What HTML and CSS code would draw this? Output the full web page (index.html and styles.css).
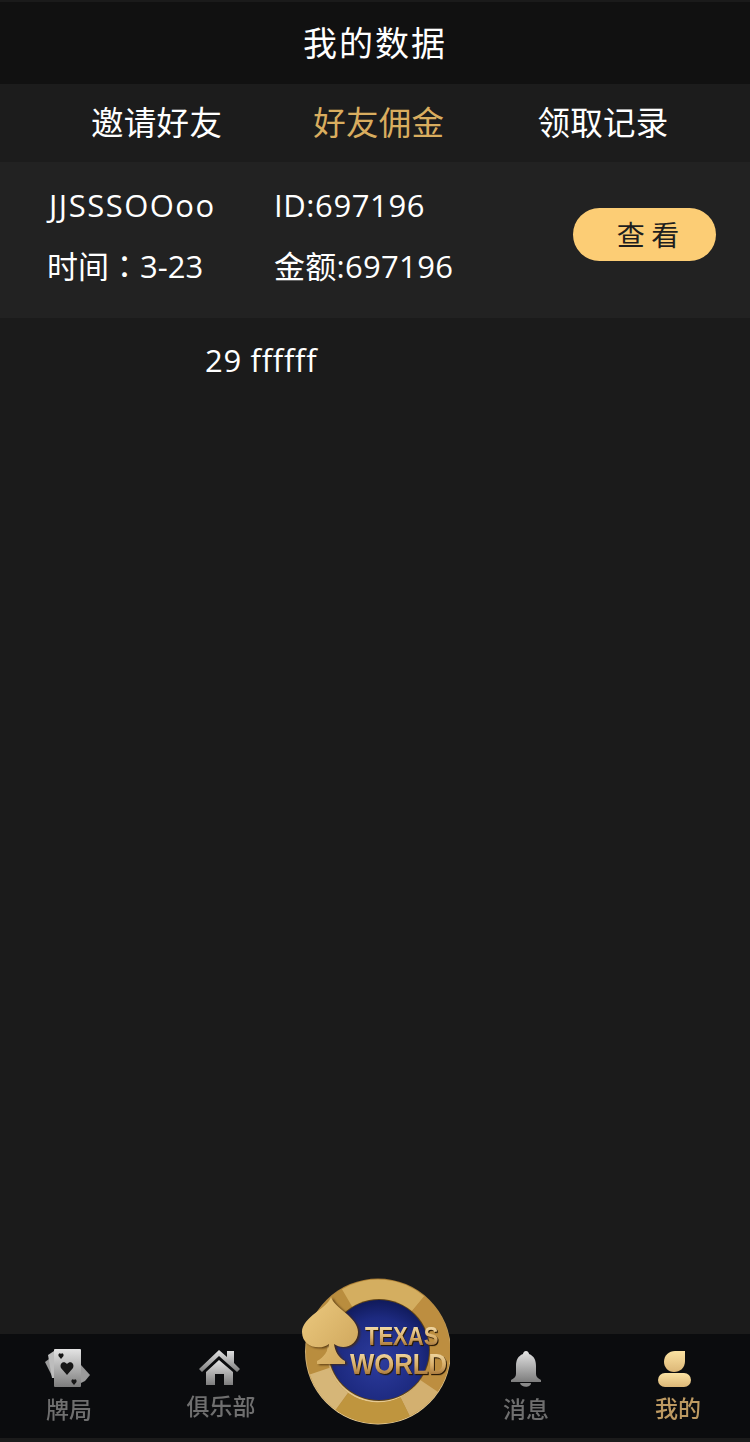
FILE: index.html
```html
<!DOCTYPE html>
<html lang="zh">
<head>
<meta charset="utf-8">
<title>我的数据</title>
<link rel="stylesheet" href="styles.css">
</head>
<body>
<div class="app">
  <header class="title">我的数据</header>
  <nav class="tabs">
    <span class="tab tab-a">邀请好友</span>
    <span class="tab tab-b active">好友佣金</span>
    <span class="tab tab-c">领取记录</span>
  </nav>
  <section class="row">
    <div class="col col-name">
      <div class="name">JJSSSOOoo</div>
      <div class="time" lang="zh-TW">时间：3-23</div>
    </div>
    <div class="col col-id">
      <div class="uid">ID:697196</div>
      <div>金额:697196</div>
    </div>
    <button class="view">查 看</button>
  </section>
  <p class="stray">29 ffffff</p>
  <div class="spacer"></div>
  <footer class="bar">
    <div class="item item-cards">
      <svg class="ico" width="48" height="40" viewBox="0 0 48 40">
        <defs>
          <linearGradient id="g" x1="0" y1="0" x2="0" y2="1"><stop offset="0" stop-color="#e4e4e4"/><stop offset="1" stop-color="#7d7d7d"/></linearGradient>
          <linearGradient id="gold" x1="0" y1="0" x2="0" y2="1"><stop offset="0" stop-color="#fbe2a2"/><stop offset="1" stop-color="#dcb777"/></linearGradient>
        </defs>
        <path d="M1 14 L9 8 L9 30 Z" fill="#9c9c9c"/>
        <path d="M4 7 L10 3 L10 30 L8 30 Z" fill="#bdbdbd"/>
        <path d="M37 17 L46 27 L41 33 L37 35 Z" fill="#9a9a9a"/>
        <rect x="10" y="1" width="27" height="38" rx="1" fill="url(#g)"/>
        <path d="M23 27 L17 20 C15 15 20 12 23 16 C26 12 31 15 29 20 Z" fill="#161616"/>
        <path d="M17 11 L14.500 8 C14 5.500 16 4.500 17 6 C18 4.500 20 5.500 19.500 8 Z" fill="#161616"/>
        <path d="M30 37 L27.500 34 C27 31.500 29 30.500 30 32 C31 30.500 33 31.500 32.500 34 Z" fill="#161616"/>
      </svg>
      <span>牌局</span>
    </div>
    <div class="item item-club">
      <svg class="ico" width="42" height="38" viewBox="0 0 42 38">
        <path d="M0 20 L20 1 L28 8 L28 2 L35 2 L35 14 L41 20 L38 23 L20 7 L3 23 Z" fill="url(#g)"/>
        <path d="M7 23 L20 11 L34 23 L34 36 L25 36 L25 25 L16 25 L16 36 L7 36 Z" fill="url(#g)"/>
      </svg>
      <span>俱乐部</span>
    </div>
    <div class="item item-gap"></div>
    <div class="item item-msg">
      <svg class="ico" width="32" height="38" viewBox="0 0 32 38">
        <path d="M16 1 C18 1 19 3 19 4 C24 6 26 10 26 16 L26 24 C26 27 28 28 31 30 L31 32 L1 32 L1 30 C4 28 6 27 6 24 L6 16 C6 10 8 6 13 4 C13 3 14 1 16 1 Z" fill="url(#g)"/>
        <path d="M10 33 L21 33 C21 38 11 38 10 33 Z" fill="#8a8a8a"/>
      </svg>
      <span>消息</span>
    </div>
    <div class="item item-me active">
      <svg class="ico" width="34" height="38" viewBox="0 0 34 38">
        <path d="M27 1 L27 11 C27 18 22 22 16 22 C10 22 6 17 6 12 C6 5 11 1 17 1 Z" fill="url(#gold)"/>
        <rect x="0" y="23" width="33" height="14" rx="7" fill="url(#gold)"/>
      </svg>
      <span>我的</span>
    </div>
    <div class="logo">
      <svg width="150" height="150" viewBox="0 0 150 150">
        <defs>
          <radialGradient id="blue" cx=".5" cy=".6" r=".6"><stop offset="0" stop-color="#2d3c9e"/><stop offset=".7" stop-color="#1d2a80"/><stop offset="1" stop-color="#101a5a"/></radialGradient>
          <linearGradient id="txt" x1="0" y1="0" x2="0" y2="1"><stop offset="0" stop-color="#fbeabc"/><stop offset=".55" stop-color="#d8ad68"/><stop offset="1" stop-color="#8a5722"/></linearGradient>
          <linearGradient id="spade" x1="0" y1="0" x2="1" y2="1"><stop offset="0" stop-color="#ecca80"/><stop offset="1" stop-color="#cda459"/></linearGradient>
          <linearGradient id="rim" x1="0" y1="0" x2="0" y2="1"><stop offset="0" stop-color="#a87c34"/><stop offset="1" stop-color="#f2d9a4"/></linearGradient>
        </defs>
        <circle cx="78" cy="74.500" r="73" fill="url(#rim)"/>
        <circle cx="78" cy="74.500" r="61.500" class="seg seg-base"/>
        <circle cx="78" cy="74.500" r="61.500" class="seg seg-top" transform="rotate(-120 78 74.500)"/>
        <circle cx="78" cy="74.500" r="61.500" class="seg seg-right" transform="rotate(-50 78 74.500)"/>
        <circle cx="78" cy="74.500" r="61.500" class="seg seg-br" transform="rotate(34 78 74.500)"/>
        <circle cx="78" cy="74.500" r="61.500" class="seg seg-bottom" transform="rotate(64 78 74.500)"/>
        <circle cx="78" cy="74.500" r="61.500" class="seg seg-bl" transform="rotate(126 78 74.500)"/>
        <circle cx="79" cy="73" r="51" fill="#5d4216"/>
        <circle cx="79" cy="73" r="50" fill="url(#blue)"/>
        <text transform="translate(65 68) scale(1 1.130)" class="logo-a" fill="url(#txt)">TEXAS</text>
        <text transform="translate(50 97) scale(1 1.180)" class="logo-b" fill="url(#txt)">WORLD</text>
        <path class="spade" d="M31 20 C34 31 58 40 58 55 C58 68 44 74 34 67 C35 74 38 80 45 84 L45 87 L17 87 L17 84 C24 80 28 74 29 67 C20 74 2 70 2 55 C2 40 28 31 31 20 Z" fill="url(#spade)"/>
      </svg>
    </div>
  </footer>
</div>
</body>
</html>
```

FILE: styles.css
```css
* { box-sizing: border-box; }
html, body { margin: 0; padding: 0; }
body {
  background: #1b1b1b;
  color: #fff;
  font-family: "Open Sans", "Noto Sans CJK TC", sans-serif;
}
.app {
  width: 750px;
  height: 1442px;
  display: flex;
  flex-direction: column;
  overflow: hidden;
}
.title {
  height: 84px;
  padding-bottom: 4px;
  border-top: 2px solid #1b1b1b;
  background: #111;
  display: flex;
  align-items: center;
  justify-content: center;
  font-size: 34px;
  letter-spacing: 2px;
  font-family: "Noto Sans CJK SC", sans-serif;
  font-weight: 400;
}
.tabs {
  height: 78px;
  padding-bottom: 6px;
  background: #1c1c1c;
  display: flex;
  align-items: center;
  font-size: 32.500px;
  letter-spacing: .3px;
  font-family: "Noto Sans CJK SC", sans-serif;
  font-weight: 400;
}
.tab { display: block; white-space: nowrap; }
.tab-a { margin-left: 91px; }
.tab-b { margin-left: 91px; }
.tab-c { margin-left: 93px; }
.tab.active { color: #d9ad5f; }
.row {
  height: 156px;
  background: #222;
  display: flex;
  align-items: center;
  font-size: 31px;
  letter-spacing: .3px;
}
.col {
  display: flex;
  flex-direction: column;
  gap: 19px;
  padding-bottom: 9px;
  line-height: 42px;
  white-space: nowrap;
}
.col-name { margin-left: 48px; width: 226px; }
.col-id { width: 299px; }
.name { padding-left: 1px; letter-spacing: 1.500px; }
.time { margin-left: -1px; letter-spacing: 0; word-spacing: 0; }
.uid { letter-spacing: .6px; }
.view {
  width: 143px;
  height: 53px;
  margin-bottom: 12px;
  border: 0;
  border-radius: 27px;
  background: #fccd75;
  color: #1e1e1e;
  font: 400 28px "Noto Sans CJK SC", sans-serif;
  padding: 0 0 0 7px;
}
.stray {
  margin: 21px 0 0 205px;
  font-size: 31px;
  line-height: 42px;
  letter-spacing: .7px;
}
.spacer { flex: 1; }
.bar {
  position: relative;
  height: 104px;
  margin-bottom: 4px;
  background: #0b0c0e;
  display: flex;
  color: #6f6f6f;
  font-size: 23px;
  font-weight: 500;
  font-family: "Noto Sans CJK SC", sans-serif;
}
.item {
  display: flex;
  flex-direction: column;
  align-items: center;
  width: 100px;
  padding-top: 14px;
  line-height: 32px;
}
.item span { margin-top: 4px; filter: blur(.35px); }
.item.active { color: #bd9a62; }
.ico { display: block; height: 40px; margin-top: 1px; margin-bottom: -1px; }
.item-cards { margin-left: 19px; }
.item-cards .ico { margin-right: 2px; margin-top: 0; margin-bottom: 0; }
.item-club { margin-left: 52px; }
.item-club .ico { margin-right: 2px; margin-top: 0; }
.item-club span { margin-top: 2px; }
.item-gap { width: 212px; }
.item-msg { margin-left: -7px; }
.item-me { margin-left: 52px; }
.item-me .ico { margin-right: 6px; }
.item-me span { margin-top: 3px; }
.logo { position: absolute; left: 300px; top: -57px; width: 150px; height: 150px; }
.logo svg { display: block; filter: blur(.4px); }
.logo-a { font: 700 22px "Liberation Sans", sans-serif; filter: drop-shadow(1px 1px 0 #2a1a06); }
.logo-b { font: 700 25.700px "Liberation Sans", sans-serif; filter: drop-shadow(1px 1px 0 #2a1a06); }
.spade { filter: drop-shadow(2px 1px 1px rgba(70,42,8,.85)); }
.seg { fill: none; stroke-width: 21px; }
.seg-base { stroke: #b98d3e; }
.seg-top { stroke: #d4ae60; stroke-dasharray: 75 311; }
.seg-right { stroke: #bd8e40; stroke-dasharray: 90 296; }
.seg-br { stroke: #d3b070; stroke-dasharray: 32 354; }
.seg-bottom { stroke: #bf953e; stroke-dasharray: 66 320; }
.seg-bl { stroke: #d6b678; stroke-dasharray: 38 348; }
```
